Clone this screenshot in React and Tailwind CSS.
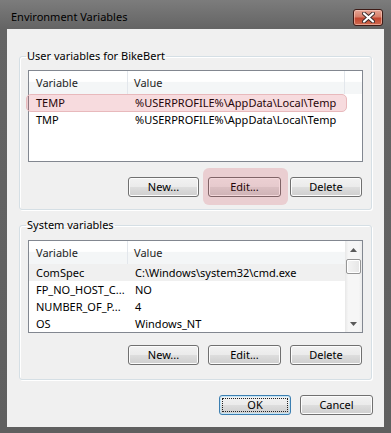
const font = { fontFamily: '"Noto Sans", "Open Sans", sans-serif' };

const userVars = [
  { name: "TEMP", value: "%USERPROFILE%\\AppData\\Local\\Temp", marked: true },
  { name: "TMP", value: "%USERPROFILE%\\AppData\\Local\\Temp" },
];

const systemVars = [
  { name: "ComSpec", value: "C:\\Windows\\system32\\cmd.exe", current: true },
  { name: "FP_NO_HOST_C...", value: "NO" },
  { name: "NUMBER_OF_P...", value: "4" },
  { name: "OS", value: "Windows_NT" },
];

function WinButton({ children, width = "w-[72px]", focused = false }) {
  return (
    <button
      className={`relative ${width} h-[20px] rounded-[3px] border ${
        focused ? "border-[#3c7fb1] shadow-[inset_0_0_0_1px_#c4e5f6]" : "border-[#707070] shadow-[inset_0_0_0_1px_#fcfcfc]"
      } bg-[linear-gradient(to_bottom,#f2f2f2_0%,#ebebeb_48%,#dddddd_52%,#cfcfcf_100%)] text-[11px] leading-[16px] text-black flex items-center justify-center`}
    >
      {focused && (
        <span className="absolute inset-[2px] border border-dotted border-[#222]" />
      )}
      <span className="relative">{children}</span>
    </button>
  );
}

function ListHeader({ endLine }) {
  return (
    <div className="flex h-[23px] bg-[linear-gradient(to_bottom,#ffffff_0%,#ffffff_45%,#f4f6f7_50%,#f4f6f7_100%)] text-[11px] leading-[16px] text-[#1e1e1e]">
      <div className="w-[99px] shrink-0 flex items-center pl-[7px] border-r border-[#e3e7ec]">
        Variable
      </div>
      <div
        className={`w-[217px] shrink-0 flex items-center pl-[6px] ${
          endLine ? "border-r border-[#e3e7ec]" : ""
        }`}
      >
        Value
      </div>
    </div>
  );
}

function Row({ name, value, bg }) {
  return (
    <div className={`flex h-[17px] items-center text-[11px] leading-[16px] text-black ${bg || ""}`}>
      <div className="w-[100px] shrink-0 pl-[7px] whitespace-nowrap overflow-hidden">{name}</div>
      <div className="pl-[6px] whitespace-nowrap">{value}</div>
    </div>
  );
}

function Arrow({ up }) {
  return (
    <div className="h-[17px] flex items-center justify-center">
      <svg width="7" height="4" viewBox="0 0 7 4">
        <path d={up ? "M0 4 L3.5 0 L7 4 Z" : "M0 0 L7 0 L3.5 4 Z"} fill="#5a5a5a" />
      </svg>
    </div>
  );
}

function Group({ title, children, className }) {
  return (
    <fieldset
      className={`border border-[#d5dfe5] rounded-[3px] shadow-[inset_1px_1px_0_#ffffff,1px_1px_0_#ffffff] px-[8px] ${className}`}
    >
      <legend className="ml-[-2px] px-[1px] text-[11px] leading-[16px] text-black">{title}</legend>
      {children}
    </fieldset>
  );
}

export default function App() {
  return (
    <div
      style={font}
      className="w-[391px] h-[433px] flex flex-col bg-[linear-gradient(to_bottom,#7c7c7c_0px,#646464_29px,#5f5f5f_100%)]"
    >
      <div className="h-[29px] flex items-start">
        <span className="ml-[11px] mt-[9px] text-[11px] leading-[16px] text-black">
          Environment Variables
        </span>
        <button className="ml-auto mr-[8px] mt-[9px] w-[30px] h-[17px] rounded-[3px] border border-[#3d1b16] bg-[linear-gradient(to_bottom,#e7a595_0%,#d7806b_45%,#c2452f_55%,#cf6a4f_100%)] shadow-[inset_0_0_0_1px_rgba(255,220,210,0.5)] flex items-center justify-center">
          <svg width="13" height="11" viewBox="0 0 13 11">
            <path d="M2 1.5 L11 9.5 M11 1.5 L2 9.5" stroke="#3a2a2a" strokeWidth="4" strokeLinecap="round" />
            <path d="M2 1.5 L11 9.5 M11 1.5 L2 9.5" stroke="#ffffff" strokeWidth="2.2" strokeLinecap="round" />
          </svg>
        </button>
      </div>

      <div className="mx-[7px] h-[398px] bg-[#f0f0f0] px-[12px] pt-[19px] flex flex-col">
        <Group title="User variables for BikeBert" className="pt-[6px] pb-[12px]">
          <div className="relative h-[92px] border border-[#828790] bg-white">
            <ListHeader endLine />
            {userVars.map((v) => (
              <Row key={v.name} name={v.name} value={v.value} />
            ))}
            <div className="absolute left-[-3px] top-[23px] w-[321px] h-[18px] rounded-[5px] border border-[#e8b9bc] bg-[rgba(205,40,60,0.17)] pointer-events-none" />
          </div>
          <div className="mt-[15px] flex justify-end gap-[9px] pr-[1px]">
            <WinButton width="w-[71px]">New...</WinButton>
            <div className="relative">
              <WinButton width="w-[73px]">Edit...</WinButton>
              <div className="absolute left-[-5px] right-[-7px] top-[-9px] bottom-[-8px] rounded-[6px] bg-[rgba(205,40,60,0.17)] pointer-events-none" />
            </div>
            <WinButton>Delete</WinButton>
          </div>
        </Group>

        <Group title="System variables" className="mt-[7px] pt-[7px] pb-[14px]">
          <div className="h-[93px] border border-[#828790] bg-white flex">
            <div className="flex-1">
              <ListHeader />
              {systemVars.map((v) => (
                <Row key={v.name} name={v.name} value={v.value} bg={v.current ? "bg-[#f0f0f0]" : ""} />
              ))}
            </div>
            <div className="w-[17px] shrink-0 flex flex-col bg-[linear-gradient(to_right,#e8e8e8_0%,#f6f6f6_20%,#f6f6f6_80%,#ececec_100%)]">
              <Arrow up />
              <div className="h-[15px] mx-[1px] mt-[1px] rounded-[2px] border border-[#969696] bg-[linear-gradient(to_right,#f4f4f4,#e6e6e6)] shadow-[inset_0_0_0_1px_#ffffff]" />
              <div className="flex-1" />
              <Arrow />
            </div>
          </div>
          <div className="mt-[12px] flex justify-end gap-[9px] pr-[1px]">
            <WinButton width="w-[71px]">New...</WinButton>
            <WinButton width="w-[73px]">Edit...</WinButton>
            <WinButton>Delete</WinButton>
          </div>
        </Group>

        <div className="mt-[15px] flex justify-end gap-[9px] mr-[-1px]">
          <WinButton focused>OK</WinButton>
          <WinButton width="w-[73px]">Cancel</WinButton>
        </div>
      </div>
    </div>
  );
}
